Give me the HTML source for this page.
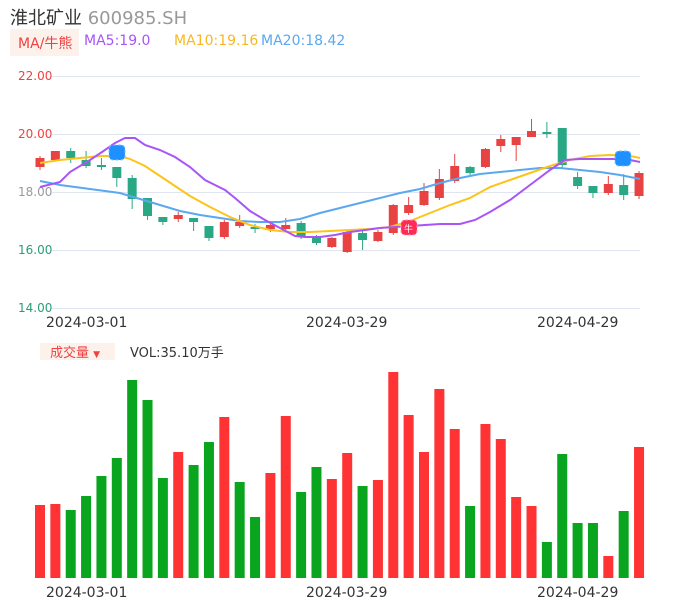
<!DOCTYPE html>
<html><head><meta charset="utf-8"><style>
body{margin:0;background:#fff;width:686px;height:606px;overflow:hidden;font-family:"DejaVu Sans","Noto Sans CJK SC",sans-serif;position:relative}
.t{position:absolute;white-space:nowrap}
</style></head><body>
<div class="t" style="left:10px;top:4px;font-size:18px;color:#333">淮北矿业 <span style="color:#999;font-size:18px">600985.SH</span></div>
<div class="t" style="left:10px;top:29px;width:69px;height:27px;background:#fdf1ec"></div>
<div class="t" style="left:18px;top:33px;font-size:14px;color:#f04040">MA/牛熊</div>
<div class="t" style="left:84px;top:33px;font-size:14px;color:#a855f7">MA5:19.0</div>
<div class="t" style="left:174px;top:33px;font-size:14px;color:#f7b822">MA10:19.16</div>
<div class="t" style="left:261px;top:33px;font-size:14px;color:#5aa8f0">MA20:18.42</div>
<div class="t" style="left:40px;top:343px;width:75px;height:17px;background:#fdf1ec"></div>
<div class="t" style="left:50px;top:342px;font-size:13px;color:#f04040">成交量 <span style="font-size:9px">▼</span></div>
<div class="t" style="left:130px;top:342px;font-size:13px;color:#333">VOL:35.10万手</div>
<svg id="s" width="686" height="606" style="position:absolute;left:0;top:0" font-family="DejaVu Sans, sans-serif">
<g stroke="#e0e5f0" stroke-width="1">
<line x1="52" x2="640" y1="76.5" y2="76.5"/><line x1="52" x2="640" y1="134.5" y2="134.5"/><line x1="52" x2="640" y1="192.5" y2="192.5"/><line x1="52" x2="640" y1="250.5" y2="250.5"/><line x1="52" x2="640" y1="308.5" y2="308.5"/>
</g>
<g font-size="12">
<text x="18" y="80" fill="#f04040">22.00</text>
<text x="18" y="138" fill="#f04040">20.00</text>
<text x="18" y="196" fill="#999">18.00</text>
<text x="18" y="254" fill="#2a9d78">16.00</text>
<text x="18" y="312" fill="#2a9d78">14.00</text>
</g>
<g font-size="14" fill="#333">
<text x="46" y="327">2024-03-01</text><text x="306" y="327">2024-03-29</text><text x="537" y="327">2024-04-29</text>
<text x="46" y="597">2024-03-01</text><text x="306" y="597">2024-03-29</text><text x="537" y="597">2024-04-29</text>
</g>
<g id="c"></g>
<polyline fill="none" stroke="#5aa8f0" stroke-width="2" points="40,181 60,185 90,189 120,193 140,199 160,205 180,211 200,215 220,218 240,221 260,222 280,222 300,219 320,213 340,208 360,203 380,198 400,193 420,189 440,183 460,178 480,174 500,172 520,170 540,168 560,168 580,170 600,172 620,175 640,179"/>
<polyline fill="none" stroke="#fcc419" stroke-width="2" points="40,163 60,160 80,158 100,156 120,156 130,159 145,166 160,176 175,186 190,196 210,207 230,217 250,225 270,230 290,232 310,232 330,231 350,230 370,229 390,227 410,221 430,213 450,205 470,198 490,187 510,180 530,173 550,166 570,160 590,156 610,155 630,156 640,158"/>
<polyline fill="none" stroke="#a855f7" stroke-width="2" points="40,187 60,182 70,172 90,160 105,150 115,143 125,138 135,138 145,145 160,150 175,157 190,167 205,180 215,185 225,190 235,198 250,211 265,220 280,228 295,236 305,237 320,237 335,235 350,232 365,230 380,228 395,227 410,226 425,225 440,224 460,224 475,220 490,212 510,200 530,185 550,170 565,160 580,159 600,159 625,159 640,162"/>
<rect x="109" y="145" width="16" height="15" rx="4" fill="#1e90ff" stroke="#7cc4ff" stroke-dasharray="3 2"/>
<rect x="615" y="151" width="16" height="15" rx="4" fill="#1e90ff" stroke="#7cc4ff" stroke-dasharray="3 2"/>
<rect x="401" y="220" width="16" height="15" rx="4" fill="#ff2a55" stroke="#ff9ab0" stroke-dasharray="3 2"/>
<text x="404" y="232" font-size="9" fill="#fff" font-family="Noto Sans CJK SC">牛</text>
</svg>
<script>
var C=[[158,167,156,170,1],[151,160,151,160,1],[151,158,148,163,0],[160,166,151,168,0],[165,167,158,170,0],[167,178,167,187,0],[178,199,175,209,0],[198,216,198,220,0],[217,222,217,225,0],[215,219,212,222,1],[218,222,218,231,0],[226,238,226,241,0],[222,237,220,239,1],[222,226,215,228,1],[227,229,224,233,0],[225,229,224,232,1],[225,229,218,230,1],[223,237,221,239,0],[237,243,235,245,0],[238,247,237,248,1],[232,252,230,253,1],[233,240,230,250,0],[232,241,230,242,1],[205,233,204,235,1],[205,213,197,215,1],[191,205,183,206,1],[179,198,169,200,1],[166,181,154,183,1],[167,173,166,176,0],[149,167,148,168,1],[139,146,135,152,1],[137,145,137,161,1],[131,137,119,137,1],[132,134,122,138,0],[128,165,128,168,0],[177,186,172,189,0],[186,193,186,198,0],[184,193,176,195,1],[185,195,174,200,0],[173,196,171,199,1]];
var V=[505,504,510,496,476,458,380,400,478,452,465,442,417,482,517,473,416,492,467,479,453,486,480,372,415,452,389,429,506,424,439,497,506,542,454,523,523,556,511,447];
var VC=[1,1,0,0,0,0,0,0,0,1,0,0,1,0,0,1,1,0,0,1,1,0,1,1,1,1,1,1,0,1,1,1,1,0,0,0,0,1,0,1];
var h='';
for(var i=0;i<40;i++){var x=40+i*15.36,c=C[i],col=c[4]?'#e84242':'#2aa784';
h+='<line x1="'+x+'" x2="'+x+'" y1="'+c[2]+'" y2="'+c[3]+'" stroke="'+col+'"/>';
h+='<rect x="'+(x-4.5)+'" y="'+c[0]+'" width="9" height="'+Math.max(1.5,c[1]-c[0])+'" fill="'+col+'"/>';
h+='<rect x="'+(x-5)+'" y="'+V[i]+'" width="10" height="'+(578-V[i])+'" fill="'+(VC[i]?'#ff3333':'#0aa51e')+'"/>';}
document.getElementById('c').innerHTML=h;
</script>
</body></html>
